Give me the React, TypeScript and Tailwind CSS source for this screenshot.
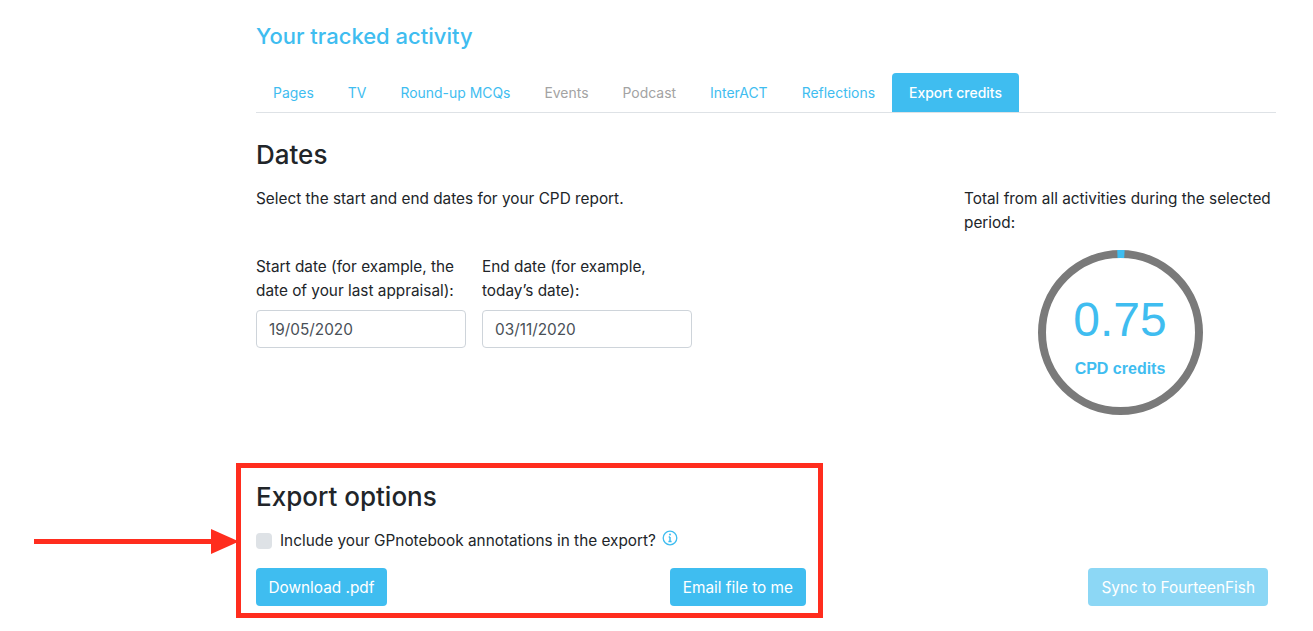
import React from "react";

const tabs = [
  { label: "Pages", cls: "text-[#3fbdf0]" },
  { label: "TV", cls: "text-[#3fbdf0]" },
  { label: "Round-up MCQs", cls: "text-[#3fbdf0]" },
  { label: "Events", cls: "text-[#a3a3a3]" },
  { label: "Podcast", cls: "text-[#a3a3a3]" },
  { label: "InterACT", cls: "text-[#3fbdf0]" },
  { label: "Reflections", cls: "text-[#3fbdf0]" },
];

function Ring() {
  const r = 78.5;
  const c = 2 * Math.PI * r;
  const part = 8;
  return (
    <svg width="166" height="166" viewBox="0 0 166 166" className="absolute inset-0">
      <circle cx="82.5" cy="82.5" r={r} fill="none" stroke="#7a7a7a" strokeWidth="8" />
      <circle
        cx="82.5"
        cy="82.5"
        r={r}
        fill="none"
        stroke="#3fbdf0"
        strokeWidth="8"
        strokeDasharray={`${part} ${c - part}`}
        strokeDashoffset={part / 2}
        transform="rotate(-90 82.5 82.5)"
      />
    </svg>
  );
}

export default function App() {
  return (
    <div className="relative h-[631px] w-[1313px] overflow-hidden bg-white pl-[256px] pr-[37px] font-['Inter','Liberation_Sans',sans-serif] text-[15.35px] text-[#212529]">
      <h1 className="pt-[21px] text-[22px] font-medium leading-[30px] text-[#3fbdf0]">Your tracked activity</h1>

      <nav className="mt-[22px] flex h-[40px] border-b border-[#dee2e6] text-[13.95px]">
        {tabs.map((t) => (
          <span key={t.label} className={`flex h-[39px] items-center px-[17px] pt-[1px] ${t.cls}`}>
            {t.label}
          </span>
        ))}
        <span className="flex h-[39px] items-center rounded-t-[4px] bg-[#3fbdf0] px-[17px] pt-[1px] font-medium text-white">
          Export credits
        </span>
      </nav>

      <div className="flex h-[350px]">
        <div className="w-[708px]">
          <h2 className="mt-[25px] text-[26px] font-medium leading-[34px]">Dates</h2>
          <p className="mt-[15px] leading-[24px]">Select the start and end dates for your CPD report.</p>
          <div className="mt-[44px] flex gap-[16px]">
            <label className="block w-[210px]">
              <span className="block h-[48px] leading-[24px]">Start date (for example, the date of your last appraisal):</span>
              <span className="mt-[7px] flex h-[38px] items-center rounded-[4px] border border-[#ced4da] px-[12px] pt-[1px] text-[#495057]">19/05/2020</span>
            </label>
            <label className="block w-[210px]">
              <span className="block h-[48px] leading-[24px]">End date (for example, today’s date):</span>
              <span className="mt-[7px] flex h-[38px] items-center rounded-[4px] border border-[#ced4da] px-[12px] pt-[1px] text-[#495057]">03/11/2020</span>
            </label>
          </div>
        </div>
        <div className="ml-auto w-[312px] pt-[74px]">
          <p className="leading-[24px]">Total from all activities during the selected period:</p>
          <div className="relative ml-[74px] mt-[15px] flex h-[166px] w-[166px] flex-col items-center pr-[2px] text-[#3fbdf0]">
            <Ring />
            <span className="mt-[38px] font-['Liberation_Sans',sans-serif] text-[48px] leading-[64px]">0.75</span>
            <span className="mt-[6px] font-['Liberation_Sans',sans-serif] text-[16px] font-bold leading-[22px]">CPD credits</span>
          </div>
        </div>
      </div>

      <div className="flex items-end">
        <section className="relative -ml-[20px] h-[155px] w-[587px] border-[5px] border-[#ff2d1e] pl-[15px] pr-[12px]">
          <svg width="206" height="26" viewBox="0 0 206 26" className="absolute left-[-207px] top-[60px]">
            <rect x="0" y="11" width="180" height="5" fill="#ff2d1e" />
            <polygon points="177,1 205,13.5 177,26" fill="#ff2d1e" />
          </svg>
          <h2 className="mt-[12px] text-[26px] font-medium leading-[34px]">Export options</h2>
          <div className="mt-[15px] flex h-[24px] items-center">
            <span className="h-[16px] w-[16px] rounded-[4px] bg-[#dee2e6]" />
            <span className="ml-[8px]">Include your GPnotebook annotations in the export?</span>
            <svg width="16" height="16" viewBox="0 0 16 16" className="ml-[6px] -mt-[6px]" fill="none" stroke="#3fbdf0">
              <circle cx="8" cy="8" r="6.8" strokeWidth="1.3" />
              <path d="M8 7v4.2M6.7 7h1.3M6.4 11.4h3.2" strokeWidth="1.5" />
              <circle cx="8" cy="4.6" r="1" fill="#3fbdf0" stroke="none" />
            </svg>
          </div>
          <div className="mt-[15px] flex justify-between">
            <button className="h-[38px] rounded-[4px] bg-[#3fbdf0] px-[12.5px] pt-[1px] text-white">Download .pdf</button>
            <button className="h-[38px] rounded-[4px] bg-[#3fbdf0] px-[13px] pt-[1px] text-white">Email file to me</button>
          </div>
        </section>
        <button className="mb-[12px] ml-auto mr-[8px] h-[38px] rounded-[4px] bg-[#8cd7f5] px-[13px] pt-[1px] text-white">Sync to FourteenFish</button>
      </div>
    </div>
  );
}
